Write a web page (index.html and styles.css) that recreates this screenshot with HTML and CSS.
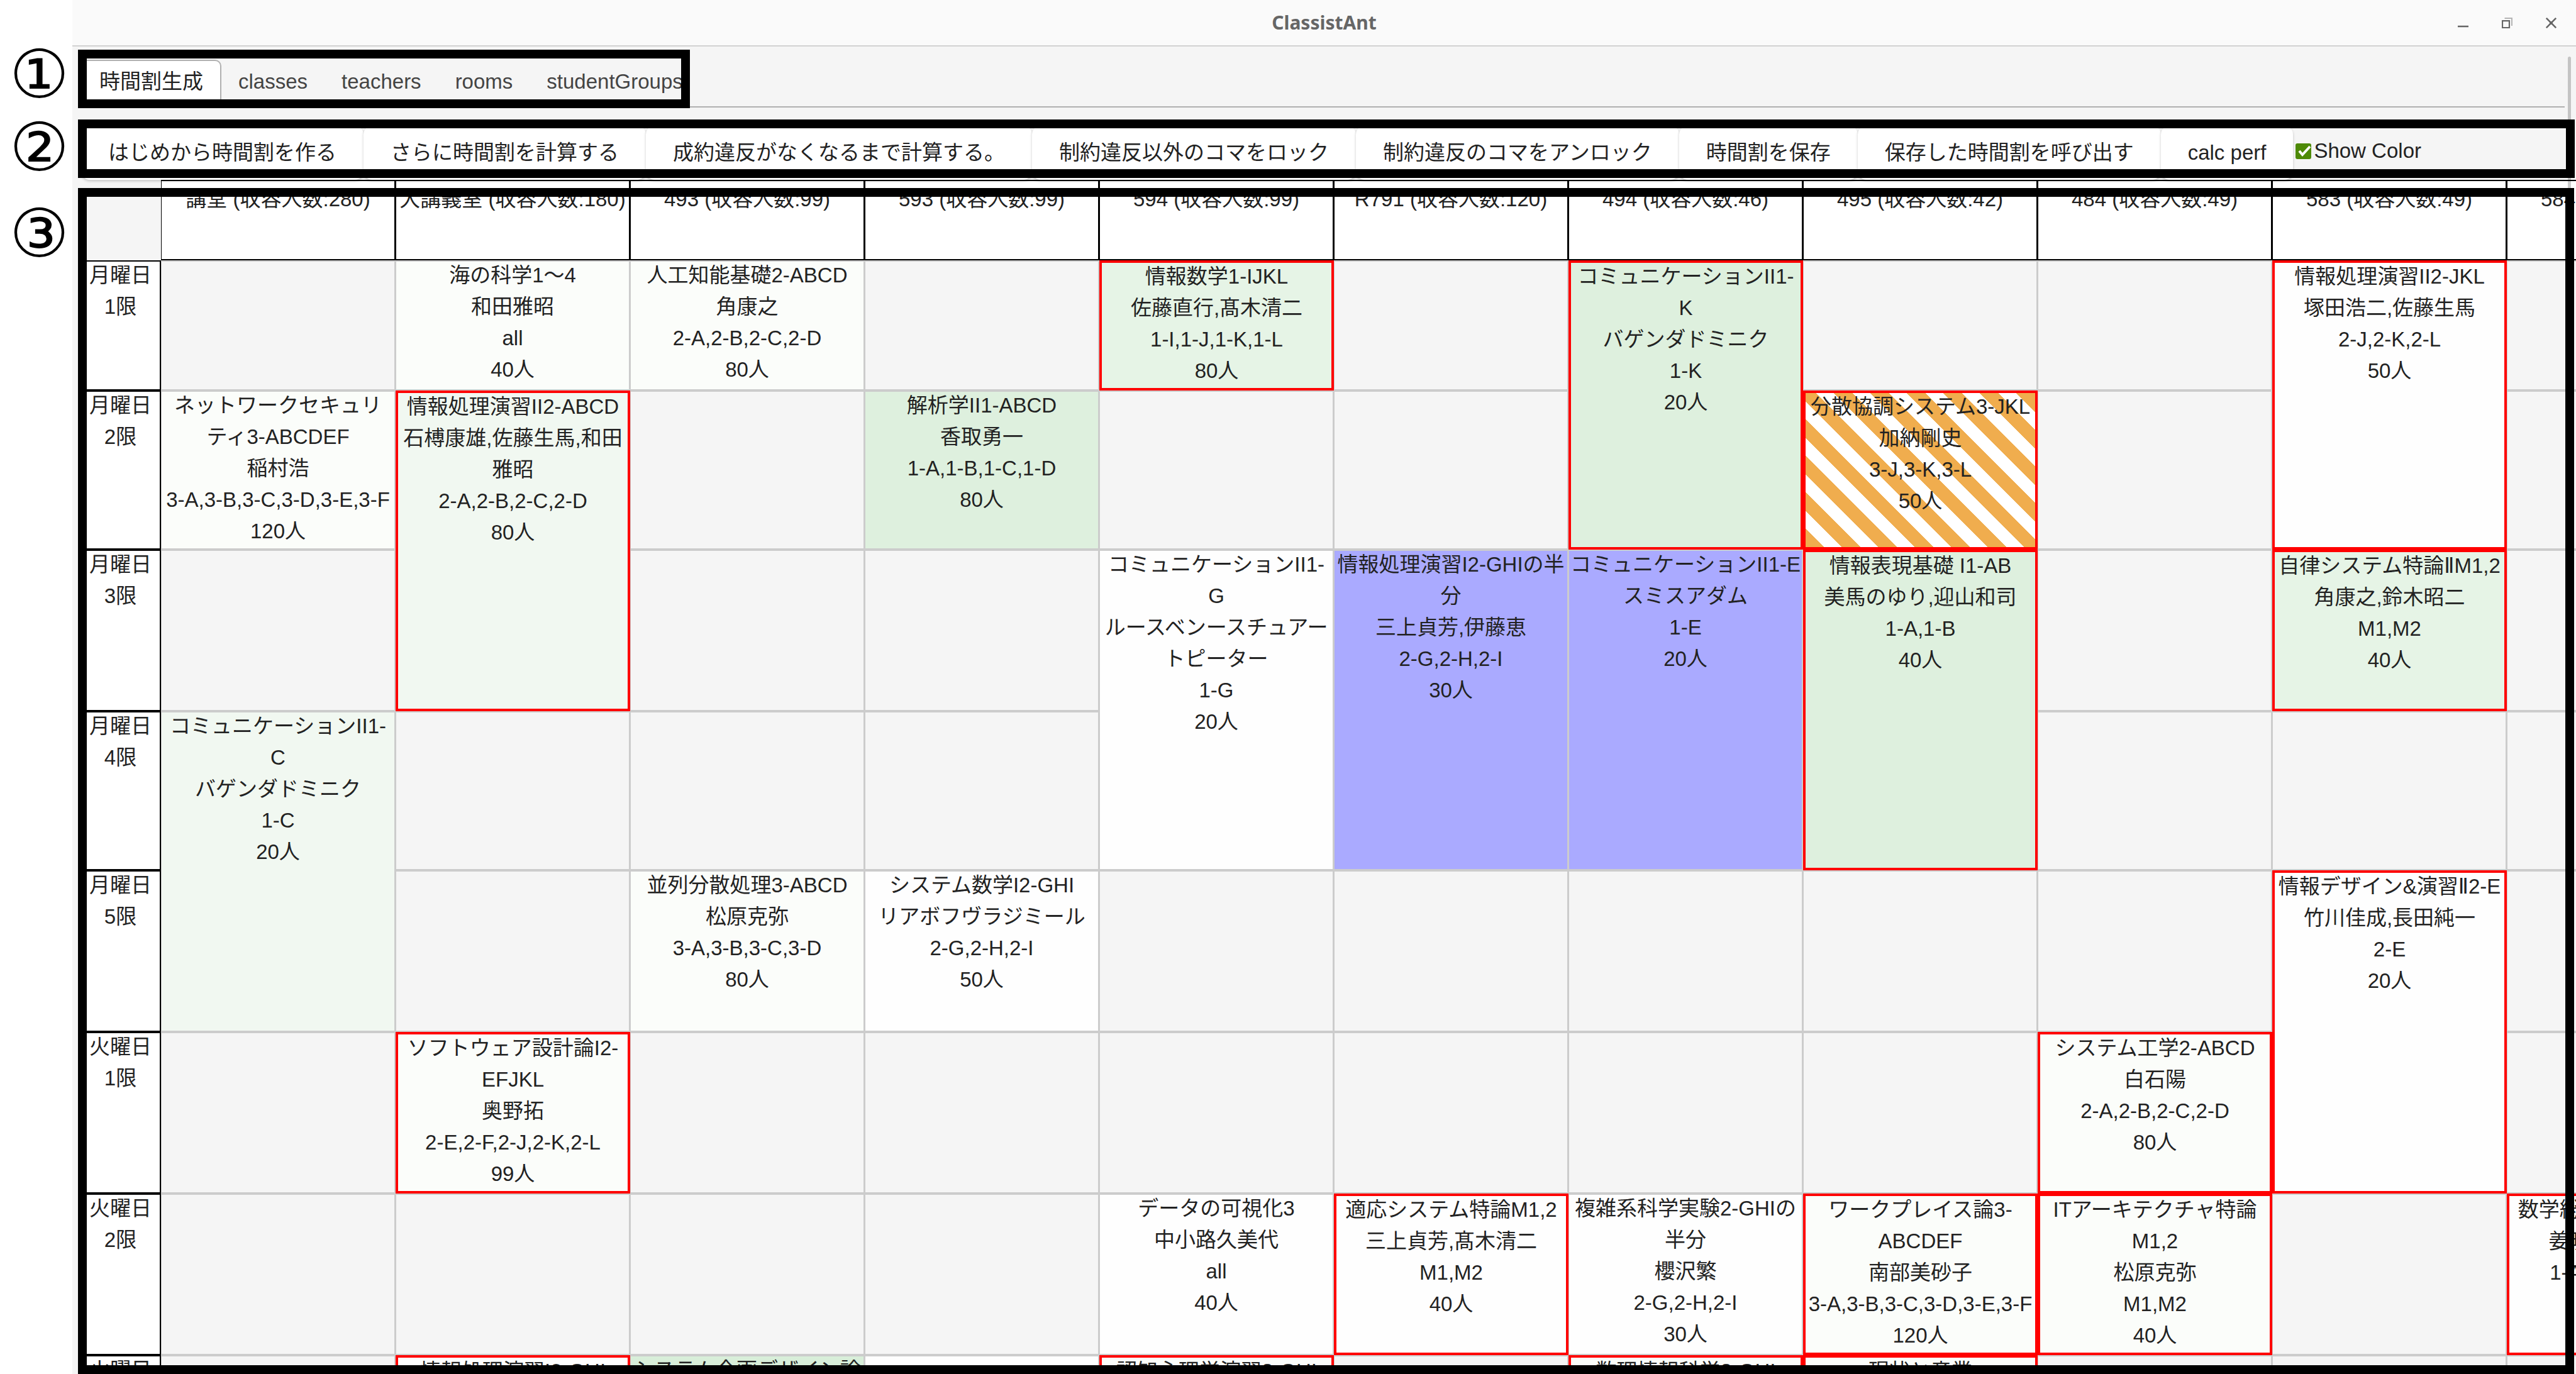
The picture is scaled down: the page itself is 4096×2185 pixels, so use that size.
FILE: index.html
```html
<!DOCTYPE html>
<html lang="ja">
<head>
<meta charset="utf-8">
<title>ClassistAnt</title>
<link rel="stylesheet" href="styles.css">
</head>
<body>
<div class="page">
<div class="window">
  <header class="titlebar">
    <h1 class="titlebar-name">ClassistAnt</h1>
    <div class="titlebar-controls">
      <button class="control" aria-label="Minimize"><svg viewBox="0 0 17 17"><path d="M0 14h17" stroke="#666" stroke-width="2.5" fill="none"/></svg></button>
      <button class="control" aria-label="Restore"><svg viewBox="0 0 17 17"><path d="M4.500 1H16v12" stroke="#b4b4b4" stroke-width="2" fill="none"/><path d="M1 5.200h11v10.800H1z" stroke="#666" stroke-width="2.200" fill="none"/></svg></button>
      <button class="control" aria-label="Close"><svg viewBox="0 0 17 17"><path d="M.8.800l15.400 15.400M16.200.800L.8 16.200" stroke="#666" stroke-width="2.600" fill="none"/><path d="M6 6h5v5H6z" fill="#666"/></svg></button>
    </div>
  </header>
  <nav class="tabs">
    <a class="tab tab-active" href="#">時間割生成</a>
    <a class="tab" href="#">classes</a>
    <a class="tab" href="#">teachers</a>
    <a class="tab" href="#">rooms</a>
    <a class="tab" href="#">studentGroups</a>
  </nav>
  <div class="toolbar">
    <button class="tool">はじめから時間割を作る</button>
    <button class="tool">さらに時間割を計算する</button>
    <button class="tool">成約違反がなくなるまで計算する。</button>
    <button class="tool">制約違反以外のコマをロック</button>
    <button class="tool">制約違反のコマをアンロック</button>
    <button class="tool">時間割を保存</button>
    <button class="tool">保存した時間割を呼び出す</button>
    <button class="tool">calc perf</button>
    <label class="color-toggle"><input type="checkbox" checked>Show Color</label>
  </div>
  <table class="timetable">
    <colgroup><col class="col-slot"><col span="11" class="col-room"></colgroup>
    <thead>
      <tr>
        <td class="corner"></td>
        <th scope="col">講堂 (収容人数:280)</th>
        <th scope="col">大講義室 (収容人数:180)</th>
        <th scope="col">493 (収容人数:99)</th>
        <th scope="col">593 (収容人数:99)</th>
        <th scope="col">594 (収容人数:99)</th>
        <th scope="col">R791 (収容人数:120)</th>
        <th scope="col">494 (収容人数:46)</th>
        <th scope="col">495 (収容人数:42)</th>
        <th scope="col">484 (収容人数:49)</th>
        <th scope="col">583 (収容人数:49)</th>
        <th scope="col">584 (収容人数:49)</th>
      </tr>
    </thead>
    <tbody>
      <tr class="slot-short">
        <th scope="row"><p>月曜日<br>1限</p></th>
        <td></td>
        <td class="tone-1"><p>海の科学1〜4<br>和田雅昭<br>all<br>40人</p></td>
        <td class="tone-1"><p>人工知能基礎2-ABCD<br>角康之<br>2-A,2-B,2-C,2-D<br>80人</p></td>
        <td></td>
        <td class="tone-3 violation"><p>情報数学1-IJKL<br>佐藤直行,髙木清二<br>1-I,1-J,1-K,1-L<br>80人</p></td>
        <td></td>
        <td class="tone-4 violation" rowspan="2"><p>コミュニケーションII1-<br>K<br>バゲンダドミニク<br>1-K<br>20人</p></td>
        <td></td>
        <td></td>
        <td class="tone-0 violation" rowspan="2"><p>情報処理演習II2-JKL<br>塚田浩二,佐藤生馬<br>2-J,2-K,2-L<br>50人</p></td>
        <td></td>
      </tr>
      <tr class="slot">
        <th scope="row"><p>月曜日<br>2限</p></th>
        <td class="tone-1"><p>ネットワークセキュリ<br>ティ3-ABCDEF<br>稲村浩<br>3-A,3-B,3-C,3-D,3-E,3-F<br>120人</p></td>
        <td class="tone-2 violation" rowspan="2"><p>情報処理演習II2-ABCD<br>石榑康雄,佐藤生馬,和田<br>雅昭<br>2-A,2-B,2-C,2-D<br>80人</p></td>
        <td></td>
        <td class="tone-4"><p>解析学II1-ABCD<br>香取勇一<br>1-A,1-B,1-C,1-D<br>80人</p></td>
        <td></td>
        <td></td>
        <td class="striped violation"><p>分散協調システム3-JKL<br>加納剛史<br>3-J,3-K,3-L<br>50人</p></td>
        <td></td>
        <td></td>
      </tr>
      <tr class="slot-tall">
        <th scope="row"><p>月曜日<br>3限</p></th>
        <td></td>
        <td></td>
        <td></td>
        <td class="tone-0" rowspan="2"><p>コミュニケーションII1-<br>G<br>ルースベンースチュアー<br>トピーター<br>1-G<br>20人</p></td>
        <td class="locked" rowspan="2"><p>情報処理演習I2-GHIの半<br>分<br>三上貞芳,伊藤恵<br>2-G,2-H,2-I<br>30人</p></td>
        <td class="locked" rowspan="2"><p>コミュニケーションII1-E<br>スミスアダム<br>1-E<br>20人</p></td>
        <td class="tone-4 violation" rowspan="2"><p>情報表現基礎 I1-AB<br>美馬のゆり,迎山和司<br>1-A,1-B<br>40人</p></td>
        <td></td>
        <td class="tone-3 violation"><p>自律システム特論<span class="roman">Ⅱ</span>M1,2<br>角康之,鈴木昭二<br>M1,M2<br>40人</p></td>
        <td></td>
      </tr>
      <tr class="slot">
        <th scope="row"><p>月曜日<br>4限</p></th>
        <td class="tone-2" rowspan="2"><p>コミュニケーションII1-<br>C<br>バゲンダドミニク<br>1-C<br>20人</p></td>
        <td></td>
        <td></td>
        <td></td>
        <td></td>
        <td></td>
        <td></td>
      </tr>
      <tr class="slot-tall">
        <th scope="row"><p>月曜日<br>5限</p></th>
        <td></td>
        <td class="tone-1"><p>並列分散処理3-ABCD<br>松原克弥<br>3-A,3-B,3-C,3-D<br>80人</p></td>
        <td class="tone-0"><p>システム数学I2-GHI<br>リアボフヴラジミール<br>2-G,2-H,2-I<br>50人</p></td>
        <td></td>
        <td></td>
        <td></td>
        <td></td>
        <td></td>
        <td class="tone-0 violation" rowspan="2"><p>情報デザイン&amp;演習<span class="roman">Ⅱ</span>2-E<br>竹川佳成,長田純一<br>2-E<br>20人</p></td>
        <td></td>
      </tr>
      <tr class="slot-tall">
        <th scope="row"><p>火曜日<br>1限</p></th>
        <td></td>
        <td class="tone-1 violation"><p>ソフトウェア設計論I2-<br>EFJKL<br>奥野拓<br>2-E,2-F,2-J,2-K,2-L<br>99人</p></td>
        <td></td>
        <td></td>
        <td></td>
        <td></td>
        <td></td>
        <td></td>
        <td class="tone-1 violation"><p>システム工学2-ABCD<br>白石陽<br>2-A,2-B,2-C,2-D<br>80人</p></td>
        <td></td>
      </tr>
      <tr class="slot-tall">
        <th scope="row"><p>火曜日<br>2限</p></th>
        <td></td>
        <td></td>
        <td></td>
        <td></td>
        <td class="tone-0"><p>データの可視化3<br>中小路久美代<br>all<br>40人</p></td>
        <td class="tone-0 violation"><p>適応システム特論M1,2<br>三上貞芳,髙木清二<br>M1,M2<br>40人</p></td>
        <td class="tone-0"><p>複雑系科学実験2-GHIの<br>半分<br>櫻沢繁<br>2-G,2-H,2-I<br>30人</p></td>
        <td class="tone-1 violation"><p>ワークプレイス論3-<br>ABCDEF<br>南部美砂子<br>3-A,3-B,3-C,3-D,3-E,3-F<br>120人</p></td>
        <td class="tone-1 violation"><p>ITアーキテクチャ特論<br>M1,2<br>松原克弥<br>M1,M2<br>40人</p></td>
        <td></td>
        <td class="tone-0 violation"><p>数学総合演習II1-ABCD<br>姜暁鴻,香取勇一<br>1-A,1-B,1-C,1-D<br>40人</p></td>
      </tr>
      <tr class="slot-tall">
        <th scope="row"><p>火曜日<br>3限</p></th>
        <td></td>
        <td class="tone-0 violation"><p>情報処理演習I2-GHI</p></td>
        <td class="tone-5"><p>システム企画デザイン論</p></td>
        <td class="tone-0"></td>
        <td class="tone-1 violation"><p>認知心理学演習3-GHI</p></td>
        <td></td>
        <td class="tone-1 violation"><p>数理情報科学3-GHI</p></td>
        <td class="tone-1 violation"><p>現状と産業</p></td>
        <td></td>
        <td></td>
        <td></td>
      </tr>
    </tbody>
  </table>
  <div class="scrollbar"></div>
</div>
<div class="frame frame-tabs"></div>
<div class="frame frame-toolbar"></div>
<div class="frame frame-table"></div>
<span class="callout callout-tabs">①</span>
<span class="callout callout-toolbar">②</span>
<span class="callout callout-table">③</span>
</div>
</body>
</html>
```
FILE: styles.css
```css
* {
  box-sizing: border-box;
}

body {
  margin: 0;
  background: #fff;
  color: #222;
  font: 33px/50px "Liberation Sans", "Noto Sans CJK JP", sans-serif;
}

p {
  margin: 0;
}

button {
  border: 0;
  margin: 0;
  padding: 0;
  background: none;
  color: inherit;
  font: inherit;
}

.page {
  position: relative;
  height: 100vh;
  padding-left: 115px;
  overflow: hidden;
}

.window {
  position: relative;
  min-height: 100%;
  background: #f5f5f5;
}

/* Title bar */
.titlebar {
  display: grid;
  grid-template-columns: 1fr auto 1fr;
  align-items: center;
  height: 74px;
  border-bottom: 2px solid #d2d2d2;
  background: #fafafa;
}

.titlebar-name {
  grid-column: 2;
  margin: 0;
  color: #666;
  font: bold 30px/50px "Noto Sans", sans-serif;
}

.titlebar-controls {
  display: flex;
  justify-content: flex-end;
  gap: 53px;
  padding-right: 31px;
}

.control {
  display: flex;
  width: 17px;
  height: 17px;
}

.control svg {
  width: 17px;
  height: 17px;
}

/* Tabs */
.tabs {
  display: flex;
  margin: 21px 18px 0 14px;
  border-bottom: 2px solid #b0b0b0;
}

.tab {
  height: 74px;
  padding: 10px 27px 0;
  color: #444;
  text-decoration: none;
  white-space: nowrap;
}

.tab-active {
  border: 2px solid #b0b0b0;
  border-bottom: 0;
  border-radius: 0 10px 0 0;
  padding: 8px 27px 0;
  background: #fff;
  color: #222;
}

/* Toolbar */
.toolbar {
  display: flex;
  align-items: flex-start;
  margin: 29px 0 0 14px;
  white-space: nowrap;
}

.tool {
  flex: none;
  height: 86px;
  padding: 0 43px;
  border-radius: 14px;
  background: #fff;
  box-shadow: 0 2px 4px rgba(0, 0, 0, 0.2);
}

.color-toggle {
  display: flex;
  align-items: center;
  gap: 4px;
  padding: 15px 0 0 4px;
}

.color-toggle input {
  width: 25px;
  height: 25px;
  margin: 0;
  border-radius: 3px;
  appearance: none;
  background: #4e8a06;
}

.color-toggle input:checked {
  background: #4e8a06 url("data:image/svg+xml,%3Csvg xmlns='http://www.w3.org/2000/svg' viewBox='0 0 25 25'%3E%3Cpath d='M6 12l5 6L23 5' fill='none' stroke='white' stroke-width='4'/%3E%3C/svg%3E") center / contain no-repeat;
}

/* Timetable */
.timetable {
  width: 4231px;
  margin-left: 13px;
  border-spacing: 0;
  table-layout: fixed;
}

.col-slot {
  width: 128px;
}

.col-room {
  width: 373px;
}

.timetable td,
.timetable th {
  padding: 0;
  border: solid #ccc;
  border-width: 2px 2px 2px 1px;
  font-weight: normal;
  text-align: center;
  vertical-align: top;
  white-space: nowrap;
}

.timetable th {
  border-color: #000;
  background: #fff;
}

.timetable .corner {
  border: 0;
}

.timetable thead tr {
  height: 128px;
}

.timetable thead th {
  padding-top: 4px;
}

.timetable p {
  margin-top: -3px;
}

.roman {
  font-family: "DejaVu Sans", sans-serif;
}

.slot-short {
  height: 207px;
}

.slot {
  height: 253px;
}

.slot-tall {
  height: 257px;
}

.timetable .tone-0 {
  background: #fefefe;
}

.timetable .tone-1 {
  background: #fbfdfa;
}

.timetable .tone-2 {
  background: #f1f8f1;
}

.timetable .tone-3 {
  background: #e6f4e6;
}

.timetable .tone-4 {
  background: #def0de;
}

.timetable .tone-5 {
  background: #d8eed9;
}

.timetable .locked {
  background: #aaf;
}

.timetable .striped {
  background: repeating-linear-gradient(45deg, #f0ad4e 0 21px, #fff 21px 41px);
}

.timetable .violation {
  border: 4px solid #f00;
}

.scrollbar {
  position: absolute;
  top: 90px;
  right: 8px;
  bottom: 0;
  width: 5px;
  border-radius: 3px;
  background: rgba(0, 0, 0, 0.2);
}

/* Numbered frames over the window */
.frame {
  position: absolute;
  border: 14px solid #000;
  pointer-events: none;
}

.frame-tabs {
  top: 79px;
  left: 124px;
  width: 973px;
  height: 93px;
}

.frame-toolbar {
  top: 190px;
  left: 124px;
  right: 2px;
  height: 93px;
}

.frame-table {
  top: 299px;
  left: 124px;
  right: 3px;
  bottom: 0;
}

.callout {
  position: absolute;
  left: 0;
  width: 125px;
  color: #000;
  font: 106px/100px "DejaVu Sans", sans-serif;
  text-align: center;
}

.callout-tabs {
  top: 69px;
}

.callout-toolbar {
  top: 185px;
}

.callout-table {
  top: 322px;
}
```
